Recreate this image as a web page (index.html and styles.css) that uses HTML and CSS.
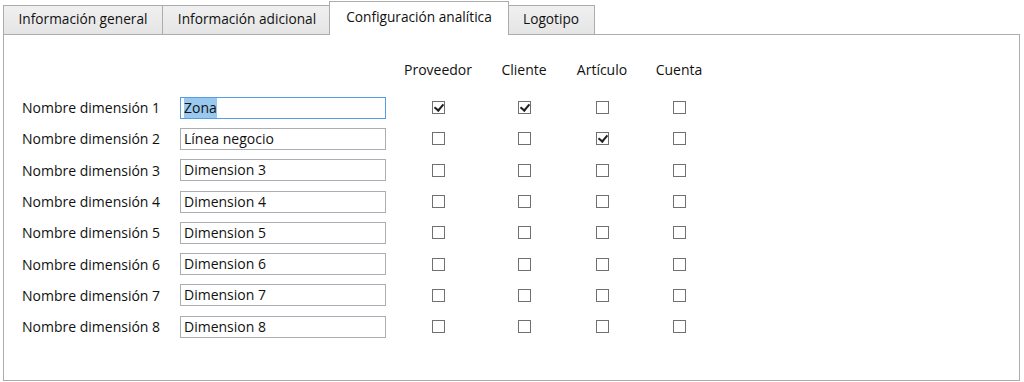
FILE: index.html
```html
<!DOCTYPE html>
<html lang="es">
<head>
<meta charset="utf-8">
<link rel="stylesheet" href="styles.css">
</head>
<body>
<div class="tabcontrol">
  <div class="tabstrip">
    <div class="tab">Información general</div>
    <div class="tab">Información adicional</div>
    <div class="tab active">Configuración analítica</div>
    <div class="tab">Logotipo</div>
  </div>
  <div class="panel">
    <div class="grid">
      <div class="hcell"></div>
      <div class="hcell"></div>
      <div class="hcell center">Proveedor</div>
      <div class="hcell center">Cliente</div>
      <div class="hcell center">Artículo</div>
      <div class="hcell center">Cuenta</div>

      <div class="label">Nombre dimensión 1</div>
      <div class="cell"><div class="textbox focused"><span class="sel">Zona</span></div></div>
      <div class="cell center"><span class="chk on"></span></div>
      <div class="cell center"><span class="chk on"></span></div>
      <div class="cell center"><span class="chk"></span></div>
      <div class="cell center"><span class="chk"></span></div>

      <div class="label">Nombre dimensión 2</div>
      <div class="cell"><div class="textbox">Línea negocio</div></div>
      <div class="cell center"><span class="chk"></span></div>
      <div class="cell center"><span class="chk"></span></div>
      <div class="cell center"><span class="chk on"></span></div>
      <div class="cell center"><span class="chk"></span></div>

      <div class="label">Nombre dimensión 3</div>
      <div class="cell"><div class="textbox">Dimension 3</div></div>
      <div class="cell center"><span class="chk"></span></div>
      <div class="cell center"><span class="chk"></span></div>
      <div class="cell center"><span class="chk"></span></div>
      <div class="cell center"><span class="chk"></span></div>

      <div class="label">Nombre dimensión 4</div>
      <div class="cell"><div class="textbox">Dimension 4</div></div>
      <div class="cell center"><span class="chk"></span></div>
      <div class="cell center"><span class="chk"></span></div>
      <div class="cell center"><span class="chk"></span></div>
      <div class="cell center"><span class="chk"></span></div>

      <div class="label">Nombre dimensión 5</div>
      <div class="cell"><div class="textbox">Dimension 5</div></div>
      <div class="cell center"><span class="chk"></span></div>
      <div class="cell center"><span class="chk"></span></div>
      <div class="cell center"><span class="chk"></span></div>
      <div class="cell center"><span class="chk"></span></div>

      <div class="label">Nombre dimensión 6</div>
      <div class="cell"><div class="textbox">Dimension 6</div></div>
      <div class="cell center"><span class="chk"></span></div>
      <div class="cell center"><span class="chk"></span></div>
      <div class="cell center"><span class="chk"></span></div>
      <div class="cell center"><span class="chk"></span></div>

      <div class="label">Nombre dimensión 7</div>
      <div class="cell"><div class="textbox">Dimension 7</div></div>
      <div class="cell center"><span class="chk"></span></div>
      <div class="cell center"><span class="chk"></span></div>
      <div class="cell center"><span class="chk"></span></div>
      <div class="cell center"><span class="chk"></span></div>

      <div class="label">Nombre dimensión 8</div>
      <div class="cell"><div class="textbox">Dimension 8</div></div>
      <div class="cell center"><span class="chk"></span></div>
      <div class="cell center"><span class="chk"></span></div>
      <div class="cell center"><span class="chk"></span></div>
      <div class="cell center"><span class="chk"></span></div>
    </div>
  </div>
</div>
</body>
</html>
```
FILE: styles.css
```css
* { box-sizing: border-box; }
html, body { margin: 0; padding: 0; background: #ffffff; }
body {
  font-family: "Open Sans", "Noto Sans", "Liberation Sans", sans-serif;
  font-size: 14px;
  color: #111;
  width: 1024px;
  height: 382px;
  overflow: hidden;
}
.tabcontrol {
  padding: 1px 4px 0 3px;
}
.tabstrip {
  display: flex;
  align-items: flex-end;
  height: 33px;
  position: relative;
  z-index: 1;
  font-size: 13.7px;
}
.tab {
  height: 29px;
  line-height: 26px;
  border: 1px solid #acacac;
  border-bottom: none;
  background: linear-gradient(#f0f0f0, #e5e5e5);
  text-align: center;
  white-space: nowrap;
  margin-right: -1px;
}
.tab:nth-child(1) { width: 160px; }
.tab:nth-child(2) { width: 170px; }
.tab:nth-child(4) { width: 88px; }
.tab.active {
  background: #ffffff;
  height: 34px;
  line-height: 30px;
  margin: 0 -2px -1px -2px;
  width: 180px;
  position: relative;
  z-index: 2;
}
.panel {
  border: 1px solid #acacac;
  height: 347px;
  padding: 20px 0 0 18px;
}
.grid {
  display: grid;
  grid-template-columns: 158px 206px 104px 68px 88px 66px;
  grid-template-rows: 37px repeat(8, 31.3px);
}
.hcell {
  padding-top: 5px;
  line-height: 20px;
}
.center { text-align: center; }
.label {
  display: flex;
  align-items: center;
  white-space: nowrap;
}
.cell {
  display: flex;
  align-items: center;
}
.cell.center { justify-content: center; }
.textbox {
  width: 206px;
  height: 22px;
  border: 1px solid #abadb3;
  line-height: 20px;
  padding: 0 3px;
  white-space: nowrap;
}
.textbox.focused { border-color: #569de5; }
.sel {
  background: #99c9ef;
  display: inline-block;
  line-height: 20px;
}
.chk {
  width: 13px;
  height: 13px;
  border: 1px solid #707070;
  background: #fff;
  position: relative;
  display: block;
}
.chk.on::after {
  content: "";
  position: absolute;
  left: 3px;
  top: 0px;
  width: 4px;
  height: 7px;
  border: solid #222;
  border-width: 0 2px 2px 0;
  transform: rotate(40deg);
}
```
